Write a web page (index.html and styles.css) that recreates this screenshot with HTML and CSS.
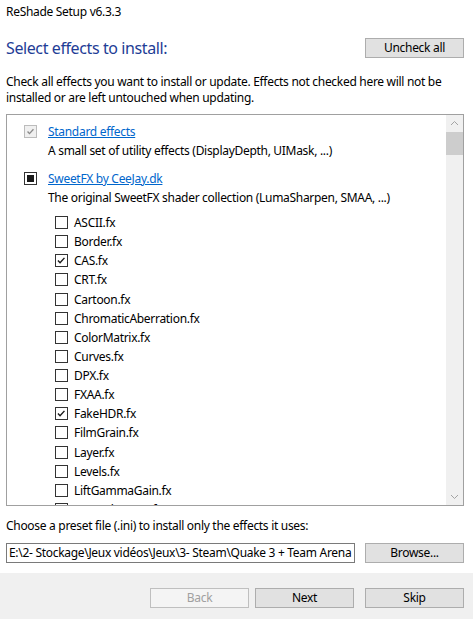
FILE: index.html
```html
<!DOCTYPE html>
<html>
<head>
<meta charset="utf-8">
<link rel="stylesheet" href="styles.css">
</head>
<body>
<div class="window">
  <div class="titlebar">ReShade Setup v6.3.3</div>
  <div class="content">
    <div class="header">
      <h1 class="heading">Select effects to install:</h1>
      <button class="btn">Uncheck all</button>
    </div>
    <p class="desc">Check all effects you want to install or update. Effects not checked here will not be installed or are left untouched when updating.</p>
    <div class="listbox">
      <div class="listinner">
        <div class="group">
          <div class="grow">
            <span class="cb cb-disabled"><svg viewBox="0 0 13 13" width="13" height="13"><path d="M3 6.5 L5.3 9 L10 3.8" fill="none" stroke="#8a8a8a" stroke-width="1.6"/></svg></span>
            <a class="link">Standard effects</a>
          </div>
          <div class="gdesc">A small set of utility effects (DisplayDepth, UIMask, ...)</div>
        </div>
        <div class="group g2">
          <div class="grow">
            <span class="cb cb-ind"><span class="fill"></span></span>
            <a class="link">SweetFX by CeeJay.dk</a>
          </div>
          <div class="gdesc">The original SweetFX shader collection (LumaSharpen, SMAA, ...)</div>
        </div>
        <ul class="items">
          <li><span class="cb"></span>ASCII.fx</li>
          <li><span class="cb"></span>Border.fx</li>
          <li><span class="cb"><svg viewBox="0 0 13 13" width="11" height="11"><path d="M2.3 6.6 L4.8 9.2 L10 3.4" fill="none" stroke="#1a1a1a" stroke-width="1.7"/></svg></span>CAS.fx</li>
          <li><span class="cb"></span>CRT.fx</li>
          <li><span class="cb"></span>Cartoon.fx</li>
          <li><span class="cb"></span>ChromaticAberration.fx</li>
          <li><span class="cb"></span>ColorMatrix.fx</li>
          <li><span class="cb"></span>Curves.fx</li>
          <li><span class="cb"></span>DPX.fx</li>
          <li><span class="cb"></span>FXAA.fx</li>
          <li><span class="cb"><svg viewBox="0 0 13 13" width="11" height="11"><path d="M2.3 6.6 L4.8 9.2 L10 3.4" fill="none" stroke="#1a1a1a" stroke-width="1.7"/></svg></span>FakeHDR.fx</li>
          <li><span class="cb"></span>FilmGrain.fx</li>
          <li><span class="cb"></span>Layer.fx</li>
          <li><span class="cb"></span>Levels.fx</li>
          <li><span class="cb"></span>LiftGammaGain.fx</li>
          <li><span class="cb"></span>LumaSharpen.fx</li>
        </ul>
      </div>
      <div class="scrollbar">
        <div class="arrow"><svg viewBox="0 0 17 17" width="17" height="17"><path d="M5 10 L8.5 6.5 L12 10" fill="none" stroke="#a3a3a3" stroke-width="1"/></svg></div>
        <div class="thumb"></div>
        <div class="track"></div>
        <div class="arrow"><svg viewBox="0 0 17 17" width="17" height="17"><path d="M5 7 L8.5 10.5 L12 7" fill="none" stroke="#a3a3a3" stroke-width="1"/></svg></div>
      </div>
    </div>
    <p class="preset-label">Choose a preset file (.ini) to install only the effects it uses:</p>
    <div class="preset-row">
      <div class="input">E:\2- Stockage\Jeux vidéos\Jeux\3- Steam\Quake 3 + Team Arena</div>
      <button class="btn">Browse...</button>
    </div>
  </div>
  <div class="footer">
    <button class="btn btn-disabled">Back</button>
    <button class="btn">Next</button>
    <button class="btn skip">Skip</button>
  </div>
</div>
</body>
</html>
```
FILE: styles.css
```css
* { box-sizing: border-box; }
html, body { margin: 0; padding: 0; background: #fff; }
body {
  font-family: "Noto Sans", "Open Sans", sans-serif;
  font-size: 12px;
  letter-spacing: -0.3px;
  color: #000;
  width: 473px;
  height: 619px;
  overflow: hidden;
}
.window { width: 473px; height: 619px; display: flex; flex-direction: column; }
.titlebar { height: 24px; line-height: 24px; padding-left: 6px; }
.content { flex: 1; padding: 0 9px 0 6px; display: flex; flex-direction: column; }
.header { display: flex; justify-content: space-between; align-items: center; margin-top: 14px; height: 20px; }
.heading { margin: 0; font-weight: normal; font-size: 16px; letter-spacing: -0.4px; color: #1e3d96; line-height: 20px; }
.btn {
  font-family: inherit;
  font-size: 12px;
  letter-spacing: -0.3px;
  width: 99px;
  height: 20px;
  padding: 0;
  background: #e1e1e1;
  border: 1px solid #adadad;
  color: #000;
  line-height: 18px;
}
.desc { margin: 16px 0 0 0; line-height: 16px; }
.listbox {
  margin-top: 8px;
  height: 392px;
  border: 1px solid #a0a0a0;
  display: flex;
  overflow: hidden;
}
.listinner { flex: 1; padding: 7px 0 0 17px; overflow: hidden; }
.grow { display: flex; align-items: center; height: 19px; }
.gdesc { padding-left: 24px; height: 19px; line-height: 19px; white-space: nowrap; }
.g2 { margin-top: 9px; }
.link { color: #0066cc; text-decoration: underline; }
.cb {
  width: 13px; height: 13px;
  border: 1px solid #333;
  background: #fff;
  display: inline-flex;
  align-items: center;
  justify-content: center;
  flex: none;
  margin-right: 11px;
}
.cb-disabled { border-color: #bcbcbc; background: #f0f0f0; }
.cb-ind .fill { width: 7px; height: 7px; background: #1a1a1a; display: block; }
.items { list-style: none; margin: 6px 0 0 31px; padding: 0; }
.items li { display: flex; align-items: center; height: 19.14px; white-space: nowrap; }
.items .cb { margin-right: 6px; }
.scrollbar { width: 17px; background: #f0f0f0; display: flex; flex-direction: column; }
.arrow { height: 17px; display: flex; align-items: center; justify-content: center; }
.thumb { height: 23px; background: #cdcdcd; }
.track { flex: 1; }
.preset-label { margin: 12px 0 0 0; line-height: 16px; }
.preset-row { display: flex; justify-content: space-between; margin-top: 9px; }
.input {
  width: 349px; height: 20px;
  border: 1px solid #7a7a7a;
  padding: 0 2px;
  line-height: 18px;
  white-space: nowrap;
  overflow: hidden;
}
.footer {
  height: 46px;
  background: #f0f0f0;
  display: flex;
  justify-content: flex-end;
  padding: 15px 9px 0 0;
  gap: 6px;
}
.footer .skip { margin-left: 5px; }
.btn-disabled { background: #f4f4f4; border-color: #bfbfbf; color: #a0a0a0; }
```
